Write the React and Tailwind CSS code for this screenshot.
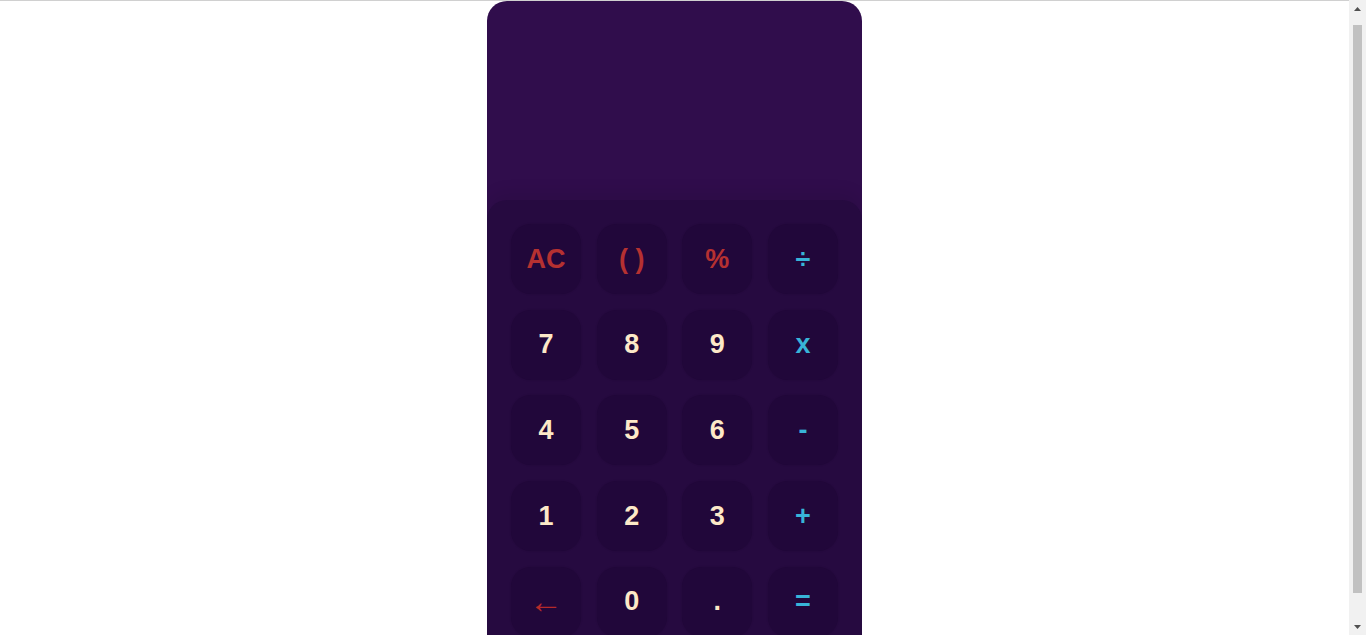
import React from "react";

const keys = [
  { l: "AC", c: "red" },
  { l: "( )", c: "red" },
  { l: "%", c: "red" },
  { l: "÷", c: "cyan" },
  { l: "7", c: "cream" },
  { l: "8", c: "cream" },
  { l: "9", c: "cream" },
  { l: "x", c: "cyan" },
  { l: "4", c: "cream" },
  { l: "5", c: "cream" },
  { l: "6", c: "cream" },
  { l: "-", c: "cyan" },
  { l: "1", c: "cream" },
  { l: "2", c: "cream" },
  { l: "3", c: "cream" },
  { l: "+", c: "cyan" },
  { l: "←", c: "arrow" },
  { l: "0", c: "cream" },
  { l: ".", c: "cream" },
  { l: "=", c: "cyan" },
];

const colorClass = {
  red: "text-[#b53131] font-bold text-[27px]",
  cyan: "text-[#38b4d8] font-bold text-[27px]",
  cream: "text-[#fde9c8] font-bold text-[27px]",
  arrow: "text-[#b52a2a] font-normal text-[34px]",
};

function Scrollbar() {
  return (
    <div className="fixed right-0 top-0 flex h-screen w-[17px] flex-col items-center bg-[#f1f1f1]">
      <div className="flex h-[17px] w-full items-center justify-center">
        <svg width="7" height="4" viewBox="0 0 7 4">
          <path d="M0 4 L3.5 0 L7 4 Z" fill="#505050" />
        </svg>
      </div>
      <div className="mt-[8px] h-[568px] w-[9px] bg-[#c1c1c1]" />
      <div className="flex-1" />
      <div className="flex h-[17px] w-full items-center justify-center">
        <svg width="7" height="4" viewBox="0 0 7 4">
          <path d="M0 0 L3.5 4 L7 0 Z" fill="#505050" />
        </svg>
      </div>
    </div>
  );
}

export default function App() {
  return (
    <div
      className="min-h-screen bg-white border-t border-[#d0d0d0]"
      style={{ fontFamily: '"Liberation Sans", Arial, sans-serif' }}
    >
      <div className="w-[calc(100%-17px)]">
        <div className="mx-auto w-[375px] rounded-t-[20px] bg-[#300d4c] overflow-hidden">
          <div className="h-[199px]" />
          <div className="rounded-t-[20px] bg-[#260a40] p-6 shadow-[0_-8px_16px_rgba(0,0,0,0.08)]">
            <div className="grid grid-cols-4 gap-[15.67px]">
              {keys.map((k) => (
                <button
                  key={k.l}
                  className={`flex h-[70px] w-[70px] items-center justify-center rounded-[20px] bg-[#21073a] shadow-[0_0_2px_rgba(0,0,0,0.15)] ${colorClass[k.c]}`}
                >
                  {k.l}
                </button>
              ))}
            </div>
          </div>
        </div>
      </div>
      <Scrollbar />
    </div>
  );
}
